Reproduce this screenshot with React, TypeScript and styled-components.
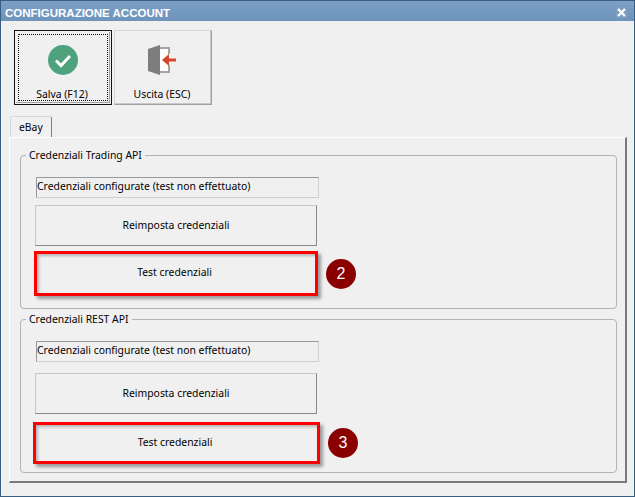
import styled, { createGlobalStyle } from "styled-components";

const GlobalStyle = createGlobalStyle`
  html, body {
    margin: 0;
    padding: 0;
    background: #f0f0f0;
  }
`;

const Window = styled.div`
  box-sizing: border-box;
  display: flex;
  flex-direction: column;
  width: 635px;
  height: 497px;
  background: #f0f0f0;
  border: 1px solid #3a5f80;
  font-family: "Noto Sans", Tahoma, sans-serif;
  font-size: 10.4px;
  color: #000;
`;

const TitleBar = styled.div`
  display: flex;
  align-items: center;
  justify-content: space-between;
  flex: none;
  height: 20px;
  padding: 2px 7px 0 4px;
  box-sizing: border-box;
  background: linear-gradient(#7f9fc2 0, #7a9fc6 2px, #6f94bb 100%);
`;

const Title = styled.span`
  margin-top: 2px;
  font-family: "Liberation Sans", Arial, sans-serif;
  font-size: 11.5px;
  font-weight: bold;
  color: #fff;
`;

const CloseButton = styled.div`
  display: flex;
  align-items: center;
  justify-content: center;
  width: 11px;
  height: 11px;
  border-radius: 1px;
  background: #7f9fc2;
`;

const Toolbar = styled.div`
  display: flex;
  gap: 2px;
  padding: 9px 0 0 13px;
`;

const ToolButton = styled.button<{ $focused?: boolean }>`
  position: relative;
  box-sizing: border-box;
  display: flex;
  flex-direction: column;
  align-items: center;
  width: 98px;
  height: 75px;
  padding: 14px 0 0;
  background: #f0f0f0;
  font: inherit;
  color: inherit;
  border: 1px solid;
  border-color: #d4d4d4 #a0a0a0 #a0a0a0 #d4d4d4;
  box-shadow: inset -1px -1px 0 #c8c8c8;
  ${(p) =>
    p.$focused &&
    `
    border: 1px solid #111;
    box-shadow: inset 0 0 0 1px #f0f0f0, inset -2px -2px 0 #a0a0a0;
    &::after {
      content: "";
      position: absolute;
      inset: 3px;
      border: 1px dotted #111;
    }
  `}
`;

const ToolLabel = styled.span`
  margin: 12px 2px 0 0;
  line-height: 14px;
`;

const TabStrip = styled.div`
  display: flex;
  margin-top: 11px;
  padding-left: 9px;
`;

const Tab = styled.div`
  box-sizing: border-box;
  width: 42px;
  height: 21px;
  padding: 3px 0 0 8px;
  background: #f0f0f0;
  border: 1px solid #d8d8d8;
  border-right: 1px solid #808080;
  border-bottom: 0;
  border-radius: 2px 2px 0 0;
`;

const TabPanel = styled.div`
  box-sizing: border-box;
  display: flex;
  flex-direction: column;
  gap: 3px;
  width: 618px;
  height: 346px;
  margin-left: 8px;
  padding: 10px 8px 0 10px;
  border-top: 1px solid #fff;
  border-left: 1px solid #fff;
  border-right: 2px solid #7a7a7a;
  border-bottom: 2px solid #7a7a7a;
`;

const Group = styled.fieldset`
  box-sizing: border-box;
  display: flex;
  flex-direction: column;
  align-items: flex-start;
  height: 161px;
  margin: 0;
  padding: 0 0 0 15px;
  border: 1px solid #b4b4b4;
  border-radius: 4px;
`;

const Legend = styled.legend`
  margin-left: -10px;
  padding: 0 3px;
  line-height: 14px;
`;

const StatusField = styled.div`
  box-sizing: border-box;
  width: 283px;
  height: 21px;
  margin: 15px 0 0;
  line-height: 17px;
  background: #f0f0f0;
  border: 1px solid;
  border-color: #999 #d0d0d0 #d0d0d0 #999;
  white-space: nowrap;
`;

const ActionButton = styled.button<{ $top: number }>`
  box-sizing: border-box;
  width: 282px;
  height: 41px;
  margin: ${(p) => p.$top}px 0 0 -1px;
  padding: 0 0 2px;
  background: #f0f0f0;
  font: inherit;
  color: inherit;
  border: 1px solid;
  border-color: #c8c8c8 #8a8a8a #8a8a8a #c8c8c8;
`;

const TestRow = styled.div<{ $top: number; $left: number }>`
  display: flex;
  align-items: center;
  gap: 8px;
  margin: ${(p) => p.$top}px 0 0 ${(p) => p.$left}px;
`;

const TestButton = styled.button<{ $w: number; $h: number }>`
  box-sizing: border-box;
  width: ${(p) => p.$w}px;
  height: ${(p) => p.$h}px;
  padding: 0 3px 3px 0;
  background: #f0f0f0;
  font: inherit;
  color: inherit;
  border: 3px solid #f00;
  box-shadow: 3px 3px 3px rgba(0, 0, 0, 0.35), inset 2px 2px 3px rgba(0, 0, 0, 0.25);
`;

const Badge = styled.div`
  display: flex;
  align-items: center;
  justify-content: center;
  flex: none;
  width: 30px;
  height: 30px;
  border-radius: 50%;
  background: #8a0000;
  color: #fff;
  font-family: "Liberation Sans", Arial, sans-serif;
  font-size: 16px;
`;

const CheckIcon = () => (
  <svg width="30" height="30" viewBox="0 0 30 30">
    <circle cx="15" cy="15" r="15" fill="#4ea37e" />
    <path d="M8 15.500l5 5 9-9.500" fill="none" stroke="#fff" strokeWidth="3" />
  </svg>
);

const ExitIcon = () => (
  <svg width="30" height="30" viewBox="0 0 30 30">
    <path d="M12 2h10v7h-2V4h-8zM12 26h8v-6h2v8H12z" fill="#a4a4a4" />
    <path d="M12 4h8v22h-8z" fill="#fff" />
    <path d="M0 4l12-4v30L0 26z" fill="#7d7d7d" />
    <path d="M18 13.500h10v3H18z" fill="#d4472c" />
    <path d="M21 9l-7 6 7 6z" fill="#d4472c" />
  </svg>
);

const CloseIcon = () => (
  <svg width="9" height="9" viewBox="0 0 9 9">
    <path d="M1 1l7 7M8 1l-7 7" stroke="#fff" strokeWidth="2.200" />
  </svg>
);

type SectionProps = {
  title: string;
  actionTop: number;
  testTop: number;
  testLeft: number;
  testWidth: number;
  testHeight: number;
  badge: string;
};

const Section = (p: SectionProps) => (
  <Group>
    <Legend>{p.title}</Legend>
    <StatusField>Credenziali configurate (test non effettuato)</StatusField>
    <ActionButton $top={p.actionTop}>Reimposta credenziali</ActionButton>
    <TestRow $top={p.testTop} $left={p.testLeft}>
      <TestButton $w={p.testWidth} $h={p.testHeight}>Test credenziali</TestButton>
      <Badge>{p.badge}</Badge>
    </TestRow>
  </Group>
);

export default function App() {
  return (
    <>
      <GlobalStyle />
      <Window>
        <TitleBar>
          <Title>CONFIGURAZIONE ACCOUNT</Title>
          <CloseButton>
            <CloseIcon />
          </CloseButton>
        </TitleBar>
        <Toolbar>
          <ToolButton $focused>
            <CheckIcon />
            <ToolLabel>Salva (F12)</ToolLabel>
          </ToolButton>
          <ToolButton>
            <ExitIcon />
            <ToolLabel>Uscita (ESC)</ToolLabel>
          </ToolButton>
        </Toolbar>
        <TabStrip>
          <Tab>eBay</Tab>
        </TabStrip>
        <TabPanel>
          <Section
            title="Credenziali Trading API"
            actionTop={7}
            testTop={5}
            testLeft={-2}
            testWidth={284}
            testHeight={45}
            badge="2"
          />
          <Section
            title="Credenziali REST API"
            actionTop={11}
            testTop={8}
            testLeft={-3}
            testWidth={287}
            testHeight={42}
            badge="3"
          />
        </TabPanel>
      </Window>
    </>
  );
}
